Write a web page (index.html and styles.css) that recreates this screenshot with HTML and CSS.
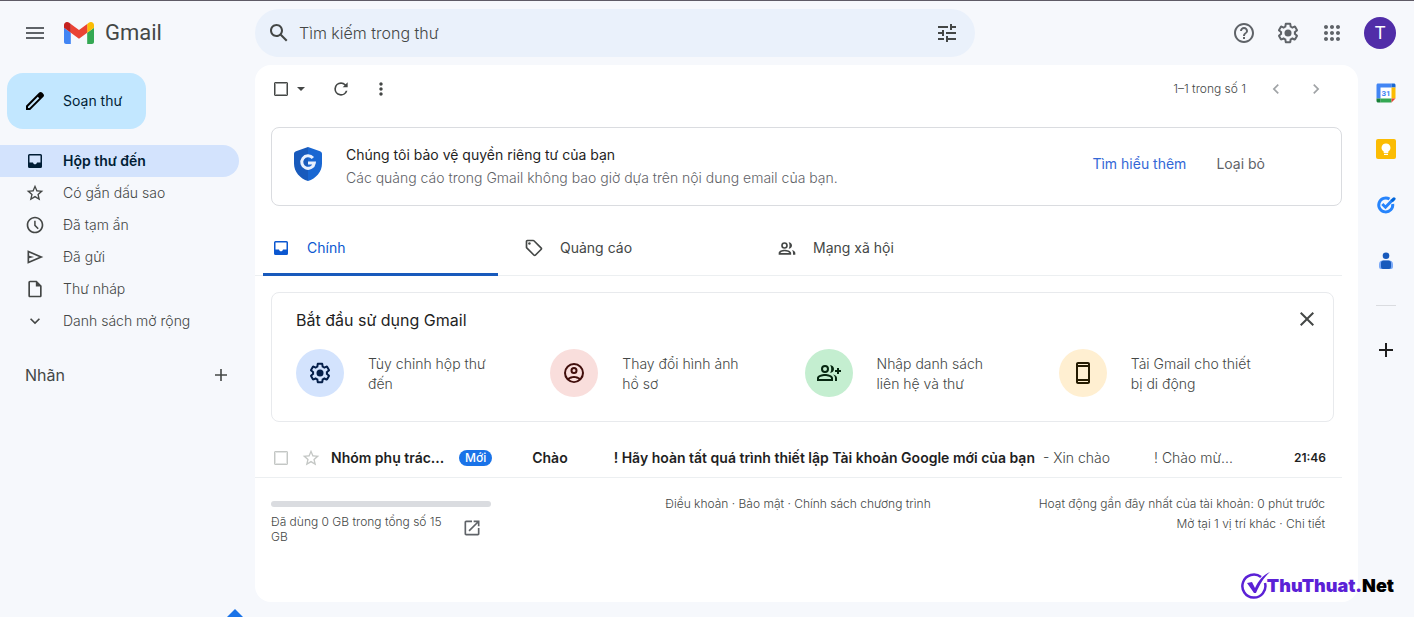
FILE: index.html
```html
<!DOCTYPE html>
<html lang="vi">
<head>
<meta charset="utf-8">
<meta name="viewport" content="width=device-width, initial-scale=1">
<title>Gmail</title>
<link rel="stylesheet" href="styles.css">
</head>
<body>
<header class="topbar">
  <div class="brand">
    <button class="icon-btn" aria-label="Trình đơn chính"><svg class="ic ic-24" viewBox="0 0 24 24"><path d="M3 18h18v-2H3v2zm0-5h18v-2H3v2zm0-7v2h18V6H3z"/></svg></button>
    <a class="logo" href="#">
      <svg class="logo-mark" viewBox="52 42 88 66" preserveAspectRatio="none" aria-hidden="true"><path fill="#4285f4" d="M58 108h14V74L52 59v43c0 3.32 2.69 6 6 6"/><path fill="#34a853" d="M120 108h14c3.32 0 6-2.69 6-6V59l-20 15"/><path fill="#fbbc04" d="M120 48v26l20-15v-8c0-7.42-8.47-11.65-14.4-7.2"/><path fill="#ea4335" d="M72 74V48l24 18 24-18v26L96 92"/><path fill="#c5221f" d="M52 51v8l20 15V48l-5.6-4.2c-5.94-4.45-14.4-.22-14.4 7.2"/></svg>
      <span>Gmail</span>
    </a>
  </div>
  <form class="search" role="search">
    <button type="button" class="icon-btn dark" aria-label="Tìm kiếm"><svg class="ic ic-24" viewBox="0 0 24 24"><path d="M20.49 19l-5.73-5.73C15.53 12.2 16 10.91 16 9.5 16 5.91 13.09 3 9.5 3S3 5.91 3 9.5 5.91 16 9.5 16c1.41 0 2.7-.47 3.77-1.24L19 20.49 20.49 19zM5 9.5C5 7.01 7.01 5 9.5 5S14 7.01 14 9.5 11.99 14 9.5 14 5 11.99 5 9.5z"/></svg></button>
    <input type="text" aria-label="Tìm kiếm trong thư" placeholder="Tìm kiếm trong thư">
    <button type="button" class="icon-btn dark" aria-label="Tùy chọn tìm kiếm"><svg class="ic ic-24" viewBox="0 0 24 24"><path d="M3 17v2h6v-2H3zM3 5v2h10V5H3zm10 16v-2h8v-2h-8v-2h-2v6h2zM7 9v2H3v2h4v2h2V9H7zm14 4v-2H11v2h10zm-6-4h2V7h4V5h-4V3h-2v6z"/></svg></button>
  </form>
  <div class="top-actions">
    <button class="icon-btn" aria-label="Hỗ trợ"><svg class="ic ic-24" viewBox="0 0 24 24"><path d="M11 18h2v-2h-2v2zm1-16C6.48 2 2 6.48 2 12s4.48 10 10 10 10-4.48 10-10S17.52 2 12 2zm0 18c-4.41 0-8-3.59-8-8s3.59-8 8-8 8 3.59 8 8-3.59 8-8 8zm0-14c-2.21 0-4 1.79-4 4h2c0-1.1.9-2 2-2s2 .9 2 2c0 2-3 1.75-3 5h2c0-2.25 3-2.5 3-5 0-2.21-1.79-4-4-4z"/></svg></button>
    <button class="icon-btn" aria-label="Cài đặt"><svg class="ic ic-24" viewBox="0 0 24 24"><path d="M13.85 22.25h-3.7c-.74 0-1.36-.54-1.45-1.27l-.27-1.89c-.27-.14-.53-.29-.79-.46l-1.8.72c-.7.26-1.47-.03-1.81-.65L2.2 15.53c-.35-.66-.2-1.44.36-1.88l1.53-1.19c-.01-.15-.02-.3-.02-.46 0-.15.01-.31.02-.46l-1.52-1.19c-.59-.45-.74-1.26-.37-1.88l1.85-3.19c.34-.62 1.11-.9 1.79-.63l1.81.73c.26-.17.52-.32.78-.46l.27-1.91c.09-.7.71-1.25 1.44-1.25h3.7c.74 0 1.36.54 1.45 1.27l.27 1.89c.27.14.53.29.79.46l1.8-.72c.71-.26 1.48.03 1.82.65l1.84 3.18c.36.66.2 1.44-.36 1.88l-1.52 1.19c.01.15.02.3.02.46s-.01.31-.02.46l1.52 1.19c.56.45.72 1.23.37 1.86l-1.86 3.22c-.34.62-1.11.9-1.8.63l-1.8-.72c-.26.17-.52.32-.78.46l-.27 1.91c-.1.68-.72 1.22-1.46 1.22zm-3.23-2h2.76l.37-2.55.53-.22c.44-.18.88-.44 1.34-.78l.45-.34 2.38.96 1.38-2.4-2.03-1.58.07-.56c.03-.26.06-.51.06-.78s-.03-.53-.06-.78l-.07-.56 2.03-1.58-1.39-2.4-2.39.96-.45-.35c-.42-.32-.87-.58-1.33-.77l-.52-.22-.37-2.55h-2.76l-.37 2.55-.53.21c-.44.19-.88.44-1.34.79l-.45.33-2.38-.95-1.39 2.39 2.03 1.58-.07.56a7 7 0 0 0-.06.79c0 .26.02.53.06.78l.07.56-2.03 1.58 1.38 2.4 2.39-.96.45.35c.43.33.86.58 1.33.77l.53.22.38 2.55z"/><circle cx="12" cy="12" r="3.5"/></svg></button>
    <button class="icon-btn" aria-label="Các ứng dụng"><svg class="ic ic-24" viewBox="0 0 24 24"><path d="M6 8c1.1 0 2-.9 2-2s-.9-2-2-2-2 .9-2 2 .9 2 2 2zm6 12c1.1 0 2-.9 2-2s-.9-2-2-2-2 .9-2 2 .9 2 2 2zm-6 0c1.1 0 2-.9 2-2s-.9-2-2-2-2 .9-2 2 .9 2 2 2zm0-6c1.1 0 2-.9 2-2s-.9-2-2-2-2 .9-2 2 .9 2 2 2zm6 0c1.1 0 2-.9 2-2s-.9-2-2-2-2 .9-2 2 .9 2 2 2zm4-8c0 1.1.9 2 2 2s2-.9 2-2-.9-2-2-2-2 .9-2 2zm-4 2c1.1 0 2-.9 2-2s-.9-2-2-2-2 .9-2 2 .9 2 2 2zm6 6c1.1 0 2-.9 2-2s-.9-2-2-2-2 .9-2 2 .9 2 2 2zm0 6c1.1 0 2-.9 2-2s-.9-2-2-2-2 .9-2 2 .9 2 2 2z"/></svg></button>
    <button class="avatar" aria-label="Tài khoản">T</button>
  </div>
</header>

<div class="layout">
  <aside class="sidebar">
    <button class="compose"><svg class="ic ic-24" viewBox="0 0 24 24"><path d="M20.41 4.94l-1.35-1.35c-.78-.78-2.05-.78-2.83 0L3 16.82V21h4.18L20.41 7.77c.79-.78.79-2.05 0-2.83zm-14 14.12L5 19v-1.36l9.82-9.82 1.41 1.41-9.82 9.83z"/></svg><span>Soạn thư</span></button>
    <nav class="folders">
      <a class="folder active" href="#"><svg class="ic ic-20" viewBox="0 0 20 20"><path d="M4.500 3h11A1.500 1.500 0 0 1 17 4.500v11a1.500 1.500 0 0 1-1.500 1.500h-11A1.500 1.500 0 0 1 3 15.500v-11A1.500 1.500 0 0 1 4.500 3zm0 1.500v7H8c.2 1 1 1.800 2 1.800s1.800-.8 2-1.800h3.500v-7z"/></svg><span>Hộp thư đến</span></a>
      <a class="folder" href="#"><svg class="ic ic-20" viewBox="0 0 24 24"><path d="M22 9.240l-7.190-.62L12 2 9.190 8.630 2 9.240l5.460 4.730L5.820 21 12 17.270 18.180 21l-1.630-7.030L22 9.240zM12 15.400l-3.760 2.270 1-4.280-3.320-2.880 4.380-.38L12 6.100l1.710 4.040 4.380.38-3.320 2.880 1 4.280L12 15.400z"/></svg><span>Có gắn dấu sao</span></a>
      <a class="folder" href="#"><svg class="ic ic-20" viewBox="0 0 24 24"><path d="M12 2C6.500 2 2 6.500 2 12s4.500 10 10 10 10-4.500 10-10S17.500 2 12 2zm0 18c-4.410 0-8-3.590-8-8s3.590-8 8-8 8 3.590 8 8-3.590 8-8 8zm-1-13h1.800v5l3.700 3.900-1.300 1.200L11 12.800z"/></svg><span>Đã tạm ẩn</span></a>
      <a class="folder" href="#"><svg class="ic ic-20" viewBox="0 0 24 24"><path d="M3 4v16l19-8L3 4zm2 3l11.850 5L5 17v-3.500l6-1.500-6-1.500V7z"/></svg><span>Đã gửi</span></a>
      <a class="folder" href="#"><svg class="ic ic-20" viewBox="0 0 24 24"><path d="M14 2H6c-1.100 0-2 .9-2 2v16c0 1.100.9 2 2 2h12c1.100 0 2-.9 2-2V8l-6-6zM6 20V4h7v5h5v11H6z"/></svg><span>Thư nháp</span></a>
      <a class="folder" href="#"><svg class="ic ic-20" viewBox="0 0 24 24"><path d="M7.410 8.590L12 13.170l4.590-4.580L18 10l-6 6-6-6z"/></svg><span>Danh sách mở rộng</span></a>
    </nav>
    <div class="labels"><h2>Nhãn</h2><button class="icon-btn dark" aria-label="Tạo nhãn mới"><svg class="ic ic-20" viewBox="0 0 20 20"><path d="M9.200 4h1.600v5.200H16v1.600h-5.200V16H9.200v-5.200H4V9.200h5.200z"/></svg></button></div>
  </aside>

  <main class="panel">
    <div class="toolbar">
      <input type="checkbox" class="check check-dark" aria-label="Chọn tất cả">
      <button class="icon-btn caret" aria-label="Chọn"><svg class="ic ic-20" viewBox="0 0 20 20"><path d="M6 8l4 4 4-4z"/></svg></button>
      <button class="icon-btn refresh" aria-label="Làm mới"><svg class="ic ic-20" viewBox="0 0 24 24"><path d="M17.650 6.350A7.960 7.960 0 0 0 12 4a8 8 0 1 0 7.730 10h-2.080A6 6 0 1 1 12 6c1.660 0 3.140.69 4.220 1.780L14 10h6V4l-2.350 2.350z"/></svg></button>
      <button class="icon-btn dark" aria-label="Thêm"><svg class="ic ic-20" viewBox="0 0 24 24"><path d="M12 8c1.100 0 2-.9 2-2s-.9-2-2-2-2 .9-2 2 .9 2 2 2zm0 2c-1.100 0-2 .9-2 2s.9 2 2 2 2-.9 2-2-.9-2-2-2zm0 6c-1.100 0-2 .9-2 2s.9 2 2 2 2-.9 2-2-.9-2-2-2z"/></svg></button>
      <span class="count">1–1 trong số 1</span>
      <button class="icon-btn pale" aria-label="Mới hơn"><svg class="ic ic-20" viewBox="0 0 24 24"><path d="M15.410 7.410L14 6l-6 6 6 6 1.410-1.410L10.830 12z"/></svg></button>
      <button class="icon-btn pale" aria-label="Cũ hơn"><svg class="ic ic-20" viewBox="0 0 24 24"><path d="M10 6L8.590 7.410 13.170 12l-4.580 4.590L10 18l6-6z"/></svg></button>
    </div>

    <section class="privacy">
      <svg class="shield" viewBox="0 0 28 34" aria-hidden="true"><path fill="#185abc" d="M14 0L2 4.300C.8 4.700 0 5.800 0 7v9.500C0 25 6 31.500 14 34z"/><path fill="#1967d2" d="M14 0l12 4.300c1.200.4 2 1.500 2 2.700v9.500C28 25 22 31.500 14 34z"/><path fill="none" stroke="#e8f0fe" stroke-width="3" d="M18.900 11A6.300 6.300 0 1 0 20.300 16H14"/></svg>
      <div class="privacy-text"><h2>Chúng tôi bảo vệ quyền riêng tư của bạn</h2><p>Các quảng cáo trong Gmail không bao giờ dựa trên nội dung email của bạn.</p></div>
      <a class="learn" href="#">Tìm hiểu thêm</a>
      <button class="dismiss">Loại bỏ</button>
    </section>

    <div class="tabs" role="tablist">
      <button class="tab selected" role="tab" aria-selected="true"><svg class="ic ic-20" viewBox="0 0 20 20"><path d="M4.500 3h11A1.500 1.500 0 0 1 17 4.500v11a1.500 1.500 0 0 1-1.500 1.500h-11A1.500 1.500 0 0 1 3 15.500v-11A1.500 1.500 0 0 1 4.500 3zm0 1.500v7H8c.2 1 1 1.800 2 1.800s1.800-.8 2-1.800h3.500v-7z"/></svg><span>Chính</span></button>
      <button class="tab" role="tab" aria-selected="false"><svg class="ic ic-20" viewBox="0 0 24 24"><path d="M21.410 11.410l-8.830-8.830c-.37-.37-.88-.58-1.410-.58H4c-1.100 0-2 .9-2 2v7.170c0 .53.21 1.040.59 1.410l8.830 8.830c.78.78 2.050.78 2.830 0l7.170-7.170c.78-.78.78-2.040-.01-2.830zM12.830 20L4 11.170V4h7.170L20 12.830 12.830 20z"/><circle cx="6.500" cy="6.500" r="1.500"/></svg><span>Quảng cáo</span></button>
      <button class="tab" role="tab" aria-selected="false"><svg class="ic ic-20" viewBox="0 0 24 24"><path d="M9 5a4 4 0 1 0 0 8 4 4 0 0 0 0-8zm0 2a2 2 0 1 1 0 4 2 2 0 0 1 0-4zm0 7c-3 0-7 1.400-7 4v2h15v-2c0-2.600-5-4-8-4zm-5 4c.3-.8 2.700-2 5-2 2.600 0 5.500 1.200 6 2zM14 5.200c.6.9 1 2.300 1 3.800s-.4 2.900-1 3.800c2.300 0 4-1.700 4-3.800s-1.700-3.800-4-3.800zM18 14.500c.8.900 1.200 2 1.200 3.500v2H22v-2c0-1.500-1.800-2.800-4-3.500z"/></svg><span>Mạng xã hội</span></button>
    </div>

    <section class="start">
      <div class="start-head"><h2>Bắt đầu sử dụng Gmail</h2><button class="icon-btn dark" aria-label="Đóng"><svg class="ic ic-24" viewBox="0 0 24 24"><path d="M19 6.410L17.590 5 12 10.590 6.410 5 5 6.410 10.590 12 5 17.590 6.410 19 12 13.410 17.590 19 19 17.590 13.410 12z"/></svg></button></div>
      <div class="steps">
        <a class="step" href="#"><span class="disc blue"><svg class="ic ic-24" viewBox="0 0 24 24"><path d="M13.850 22.250h-3.700c-.74 0-1.360-.54-1.450-1.270l-.27-1.890c-.27-.14-.53-.29-.79-.46l-1.800.72c-.7.26-1.470-.03-1.810-.65L2.200 15.530c-.35-.66-.2-1.440.36-1.880l1.530-1.190c-.01-.15-.02-.3-.02-.46 0-.15.01-.31.02-.46l-1.520-1.190c-.59-.45-.74-1.260-.37-1.880l1.850-3.190c.34-.62 1.110-.9 1.790-.63l1.810.73c.26-.17.52-.32.78-.46l.27-1.910c.09-.7.71-1.250 1.440-1.250h3.700c.74 0 1.360.54 1.450 1.270l.27 1.890c.27.14.53.29.79.46l1.800-.72c.71-.26 1.480.03 1.820.65l1.840 3.180c.36.66.2 1.440-.36 1.880l-1.520 1.190c.01.15.02.3.02.46s-.01.31-.02.46l1.520 1.190c.56.45.72 1.230.37 1.860l-1.860 3.220c-.34.62-1.110.9-1.800.63l-1.800-.72c-.26.17-.52.32-.78.46l-.27 1.910c-.1.68-.72 1.220-1.460 1.220zm-3.230-2h2.760l.37-2.550.53-.22c.44-.18.88-.44 1.340-.78l.45-.34 2.380.96 1.380-2.400-2.030-1.580.07-.56c.03-.26.06-.51.06-.78s-.03-.53-.06-.78l-.07-.56 2.030-1.580-1.390-2.400-2.390.96-.45-.35c-.42-.32-.87-.58-1.330-.77l-.52-.22-.37-2.550h-2.760l-.37 2.550-.53.21c-.44.19-.88.44-1.340.79l-.45.33-2.380-.95-1.390 2.390 2.030 1.580-.07.56a7 7 0 0 0-.06.79c0 .26.02.53.06.78l.07.56-2.030 1.580 1.380 2.400 2.390-.96.45.35c.43.33.86.58 1.330.77l.53.22.38 2.550z"/><circle cx="12" cy="12" r="3.500"/></svg></span><span class="step-text">Tùy chỉnh hộp thư đến</span></a>
        <a class="step" href="#"><span class="disc red"><svg class="ic ic-24" viewBox="0 0 24 24"><path d="M12 2a10 10 0 1 0 0 20 10 10 0 0 0 0-20zM7.350 18.500C8.660 17.560 10.260 17 12 17s3.340.56 4.650 1.500a8 8 0 0 1-9.300 0zm10.790-1.380a9.950 9.950 0 0 0-12.280 0A8 8 0 1 1 18.140 17.120zM12 6a3.500 3.500 0 1 0 0 7 3.500 3.500 0 0 0 0-7zm0 2a1.500 1.500 0 1 1 0 3 1.500 1.500 0 0 1 0-3z"/></svg></span><span class="step-text">Thay đổi hình ảnh hồ sơ</span></a>
        <a class="step" href="#"><span class="disc green"><svg class="ic ic-28" viewBox="0 0 28 24"><path d="M10 4a4 4 0 1 0 0 8 4 4 0 0 0 0-8zm0 2a2 2 0 1 1 0 4 2 2 0 0 1 0-4zm0 7c-2.700 0-8 1.300-8 4v3h16v-3c0-2.700-5.300-4-8-4zm6 5H4v-1c0-.6 3-2 6-2s6 1.400 6 2zM15 4c.8 1 1.200 2.400 1.200 4S15.800 11 15 12c2.300-.2 4-1.900 4-4s-1.700-3.800-4-4zM18 13.500c1.200.9 2 2 2 3.500v3h2v-3c0-1.700-1.800-2.900-4-3.500zM22 7h2v2h2v2h-2v2h-2v-2h-2V9h2z"/></svg></span><span class="step-text">Nhập danh sách liên hệ và thư</span></a>
        <a class="step" href="#"><span class="disc yellow"><svg class="ic ic-24" viewBox="0 0 24 24"><path d="M17 1H7c-1.100 0-2 .9-2 2v18c0 1.100.9 2 2 2h10c1.100 0 2-.9 2-2V3c0-1.100-.9-2-2-2zM7 3h10v1H7zm10 18H7v-1h10zm0-3H7V6h10z"/></svg></span><span class="step-text">Tải Gmail cho thiết bị di động</span></a>
      </div>
    </section>

    <div class="mail">
      <input type="checkbox" class="check" aria-label="Chọn thư">
      <button class="icon-btn faint" aria-label="Gắn dấu sao"><svg class="ic ic-20" viewBox="0 0 24 24"><path d="M22 9.240l-7.190-.62L12 2 9.190 8.630 2 9.240l5.460 4.730L5.820 21 12 17.270 18.180 21l-1.630-7.030L22 9.240zM12 15.400l-3.760 2.270 1-4.280-3.320-2.880 4.380-.38L12 6.100l1.710 4.040 4.380.38-3.320 2.880 1 4.280L12 15.400z"/></svg></button>
      <span class="sender">Nhóm phụ trác...</span>
      <span class="badge">Mới</span>
      <a class="subject" href="#"><b class="hello">Chào</b><b>! Hãy hoàn tất quá trình thiết lập Tài khoản Google mới của bạn</b><span class="snippet">- Xin chào</span><span class="snippet-end">! Chào mừ...</span></a>
      <time>21:46</time>
    </div>

    <footer class="foot">
      <div class="storage">
        <div class="meter"></div>
        <div class="usage"><span>Đã dùng 0 GB trong tổng số 15 GB</span><a href="#" aria-label="Quản lý bộ nhớ"><svg class="ic ic-20" viewBox="0 0 24 24"><path d="M19 19H5V5h7V3H5c-1.110 0-2 .9-2 2v14c0 1.100.89 2 2 2h14c1.100 0 2-.9 2-2v-7h-2v7zM14 3v2h3.590l-9.830 9.830 1.410 1.410L19 6.410V10h2V3h-7z"/></svg></a></div>
      </div>
      <div class="legal"><a href="#">Điều khoản</a> · <a href="#">Bảo mật</a> · <a href="#">Chính sách chương trình</a></div>
      <div class="activity">Hoạt động gần đây nhất của tài khoản: 0 phút trước<br>Mở tại 1 vị trí khác · <a href="#">Chi tiết</a></div>
    </footer>
  </main>

  <aside class="rail">
    <a href="#" aria-label="Lịch"><svg class="app" viewBox="0 0 20 20"><path fill="#fff" d="M4 4h12v12H4z"/><path fill="#4285f4" d="M2 .5h13.500v4h-11v11h-4V2C.5 1.200 1.200.5 2 .5z"/><path fill="#1967d2" d="M15.500.5H18c.8 0 1.500.7 1.500 1.500v2.500h-4z"/><path fill="#fbbc04" d="M15.500 4.500h4v11h-4z"/><path fill="#34a853" d="M4.500 15.500h11v4h-11z"/><path fill="#188038" d="M.5 15.500h4v4H2c-.8 0-1.500-.7-1.500-1.500z"/><path fill="#ea4335" d="M15.500 15.500h4l-4 4z"/><text x="10" y="13" text-anchor="middle" class="day">31</text></svg></a>
    <a href="#" aria-label="Keep"><svg class="app" viewBox="0 0 20 20"><rect width="20" height="20" rx="2" fill="#fbbc04"/><path fill="#fff" d="M10 4.500a4.300 4.300 0 0 0-2.300 8V14h4.600v-1.500a4.300 4.300 0 0 0-2.300-8zM8 14.700h4V16H8z"/></svg></a>
    <a href="#" aria-label="Tasks"><svg class="app" viewBox="0 0 20 20"><path fill="none" stroke="#2684fc" stroke-width="3" d="M13.500 4A7 7 0 1 0 16.700 9"/><path fill="none" stroke="#2684fc" stroke-width="3" d="M6.300 9l3.200 3.200L16 5.500"/><path fill="#0066da" d="M14.500 5l2.300-2.300a1.600 1.600 0 0 1 2.300 2.300l-2.300 2.300z"/></svg></a>
    <a href="#" aria-label="Danh bạ"><svg class="app" viewBox="0 0 20 20"><circle cx="10" cy="4.800" r="3.300" fill="#185abc"/><path fill="#7baaf7" d="M7 9.500h6a4 4 0 0 1 4 4V16a2 2 0 0 1-2 2H5a2 2 0 0 1-2-2v-2.500a4 4 0 0 1 4-4z"/><path fill="#185abc" d="M7.500 9.500h5a2.500 2.500 0 0 1 2.500 2.500v4a2 2 0 0 1-2 2H7a2 2 0 0 1-2-2v-4a2.500 2.500 0 0 1 2.500-2.500z"/></svg></a>
    <hr>
    <button class="icon-btn black" aria-label="Tải tiện ích bổ sung"><svg class="ic ic-20" viewBox="0 0 20 20"><path d="M9 3h2v6h6v2h-6v6H9v-6H3V9h6z"/></svg></button>
  </aside>
</div>
<div class="pointer"></div>
<div class="watermark"><svg class="tick" viewBox="0 0 30 28" aria-hidden="true"><path fill="none" stroke="#5b21d6" stroke-width="2.500" d="M20 5A11.500 11.500 0 1 0 24 11"/><path fill="#5b21d6" d="M6 11l5-1 3 6C17 9 22 3 29 0c-6 5-10 12-14 21h-2z"/></svg><span>ThuThuat.</span><span class="net">Net</span></div>
</body>
</html>
```
FILE: styles.css
```css
* { box-sizing: border-box; }
body {
  margin: 0;
  min-height: 100vh;
  display: flex;
  flex-direction: column;
  overflow-x: hidden;
  position: relative;
  background: #f6f8fc;
  border-top: 1px solid #5f5b66;
  color: #444746;
  font: 14px/20px Inter, "Noto Sans", sans-serif;
}
a { color: inherit; text-decoration: none; }
h2, p { margin: 0; font-weight: 400; }
button, input { font: inherit; color: inherit; }
button { border: 0; padding: 0; background: none; cursor: pointer; }
.ic { display: block; fill: currentColor; flex: none; }
.ic-20 { width: 20px; height: 20px; }
.ic-24 { width: 24px; height: 24px; }
.ic-28 { width: 28px; height: 24px; }
.icon-btn { display: grid; place-items: center; flex: none; color: #5f6368; }
.dark { color: #444746; }
.faint { color: #c4c7c5; }
.pale { color: #a0a3a6; }
.black { color: #1f1f1f; }

.topbar { display: flex; align-items: center; height: 64px; padding-right: 18px; }
.brand { display: flex; align-items: center; gap: 17px; width: 255px; padding-left: 23px; flex: none; }
.logo { display: flex; align-items: center; gap: 11px; font: 22px/28px Roboto, sans-serif; color: #444746; }
.logo-mark { width: 30px; height: 22px; }
.search { display: flex; align-items: center; gap: 8px; flex: 0 1 720px; height: 48px; padding: 0 16px 0 12px; border-radius: 24px; background: #eaf1fb; }
.search input { flex: 1; min-width: 0; border: 0; outline: 0; padding: 0; background: none; font-size: 16px; font-weight: 300; }
.search input::placeholder { color: #444746; opacity: 1; }
.top-actions { display: flex; align-items: center; gap: 20px; margin-left: auto; }
.avatar { width: 32px; height: 32px; border-radius: 50%; background: #512da8; color: #fff; font: 18px/32px Roboto, sans-serif; }

.layout { display: flex; flex: 1; padding-bottom: 15px; }
.sidebar { width: 255px; flex: none; padding: 8px 16px 0 0; }
.compose { display: flex; align-items: center; gap: 16px; height: 56px; margin: 0 0 16px 7px; padding: 0 24px 0 16px; border-radius: 16px; background: #c2e7ff; color: #001d35; }
.compose .ic { color: #000; }
.folder { display: flex; align-items: center; gap: 18px; height: 32px; padding-left: 25px; border-radius: 0 16px 16px 0; font-weight: 300; }
.folder.active { background: #d3e3fd; color: #001d35; font-weight: 600; }
.labels { display: flex; align-items: center; justify-content: space-between; margin-top: 28px; padding: 0 8px 0 25px; }
.labels h2 { font-size: 16px; line-height: 20px; }

.panel { flex: 1; min-width: 0; border-radius: 16px; background: #fff; }
.toolbar { display: flex; align-items: center; height: 48px; padding: 0 32px 0 19px; }
.check { appearance: none; width: 14px; height: 14px; margin: 0; flex: none; border: 1px solid #c4c7c5; outline: 1px solid #e3e5e4; outline-offset: -2px; border-radius: 1px; }
.check-dark { border-color: #444746; outline-color: #9fa1a0; }
.caret { margin-left: 3px; color: #444746; }
.refresh { margin: 0 20px; color: #444746; }
.count { margin-left: auto; font-size: 12px; font-weight: 300; }
.toolbar .pale { margin-left: 20px; }

.privacy { display: flex; align-items: center; margin: 14px 16px 0; height: 79px; padding: 0 76px 2px 22px; border: 1px solid #dadce0; border-radius: 8px; }
.shield { width: 28px; height: 34px; margin: 0 24px 3px 0; flex: none; }
.privacy-text { flex: 1; min-width: 0; }
.privacy-text h2 { font-size: 14px; line-height: 23px; color: #1f1f1f; }
.privacy-text p { line-height: 23px; font-weight: 300; color: #5f6368; }
.learn { margin: 0 30px 3px; color: #3367d6; }
.dismiss { margin-bottom: 3px; color: #5f6368; }

.tabs { display: flex; margin: 14px 16px 0 0; padding-left: 8px; border-bottom: 1px solid #eceff1; }
.tab { display: flex; align-items: center; gap: 16px; width: 235px; height: 56px; margin: 0 18px -1px 0; padding: 2px 0 0 8px; border-bottom: 3px solid transparent; }
.tab.selected { color: #0b57d0; border-bottom-color: #185abc; border-radius: 2px 2px 0 0; }

.start { margin: 16px 24px 0 16px; height: 130px; padding: 14px 20px 0 24px; border: 1px solid #e8eaed; border-radius: 8px; }
.start-head { display: flex; align-items: center; justify-content: space-between; height: 26px; }
.start-head h2 { font-size: 16px; line-height: 24px; color: #1f1f1f; }
.start-head .icon-btn { margin: 0 -6px 2px 0; }
.steps { display: grid; grid-template-columns: repeat(4, 1fr); margin-top: 16px; }
.step { display: flex; align-items: center; gap: 24px; }
.disc { display: grid; place-items: center; width: 48px; height: 48px; border-radius: 50%; flex: none; }
.blue { background: #d3e3fd; color: #041e49; }
.red { background: #f9dedc; color: #410e0b; }
.green { background: #c4eed0; color: #072711; }
.yellow { background: #ffefd1; color: #241a00; }
.step-text { width: 124px; padding-top: 2px; font-weight: 300; }

.mail { display: flex; align-items: center; height: 40px; margin: 16px 16px 0 0; padding: 0 16px 0 19px; border-bottom: 1px solid #eceff1; white-space: nowrap; color: #1f1f1f; }
.mail .faint { margin: 0 10px 0 13px; }
.sender { width: 112px; font-weight: 600; }
.badge { margin: 0 40px 0 16px; padding: 0 6px; border-radius: 8px; background: #1a73e8; color: #fff; font-size: 12px; line-height: 16px; font-weight: 500; }
.subject { display: flex; flex: 1; min-width: 0; overflow: hidden; }
.subject b { font-weight: 600; }
.hello { margin-right: 46px; }
.snippet { margin: 0 44px 0 8px; font-weight: 300; color: #444746; }
.snippet-end { font-weight: 300; color: #444746; }
.mail time { font-size: 12px; font-weight: 600; }

.foot { display: grid; grid-template-columns: 1fr auto 1fr; align-items: start; padding: 16px 33px 0 16px; font-size: 12px; line-height: 20px; font-weight: 300; }
.storage { width: 220px; padding-top: 7px; }
.meter { height: 6px; border-radius: 3px; background: #dadce0; }
.usage { display: flex; align-items: center; gap: 16px; margin-top: 7px; padding-right: 9px; line-height: 15px; }
.usage span { flex: 1; }
.usage a { margin-bottom: 3px; color: #5f6368; }
.activity { text-align: right; }

.rail { display: flex; flex-direction: column; align-items: center; gap: 36px; width: 56px; flex: none; padding-top: 18px; }
.rail a { display: block; }
.app { display: block; width: 20px; height: 20px; }
.day { font: 700 8px Roboto, sans-serif; fill: #4285f4; }
.rail hr { width: 20px; margin: -2px 0; border: 0; border-top: 1px solid #dadce0; }

.pointer { position: absolute; left: 227px; bottom: 0; border: 8px solid transparent; border-top-width: 0; border-bottom-color: #1a73e8; }
.watermark { position: absolute; right: 20px; bottom: 16px; display: flex; align-items: center; color: #5b21d6; font: 900 18px/30px Inter, sans-serif; }
.tick { width: 30px; height: 28px; margin-right: -4px; }
.net { color: #000; }
```
